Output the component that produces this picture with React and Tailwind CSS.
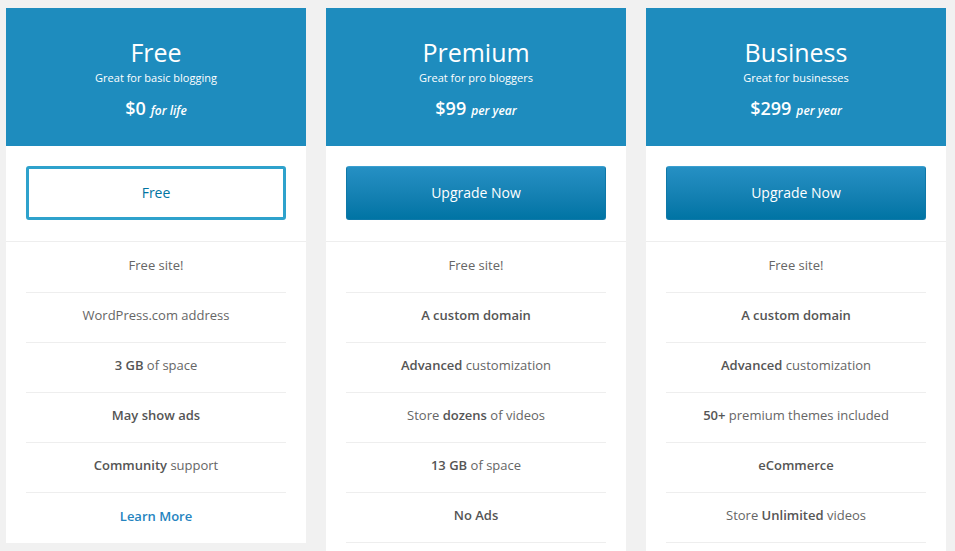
import React from "react";

const plans = [
  {
    name: "Free",
    tagline: "Great for basic blogging",
    price: "$0",
    period: "for life",
    free: true,
    features: [
      [{ t: "Free site!" }],
      [{ t: "WordPress.com address" }],
      [{ t: "3 GB", b: true }, { t: " of space" }],
      [{ t: "May show ads", b: true }],
      [{ t: "Community", b: true }, { t: " support" }],
    ],
  },
  {
    name: "Premium",
    tagline: "Great for pro bloggers",
    price: "$99",
    period: "per year",
    features: [
      [{ t: "Free site!" }],
      [{ t: "A custom domain", b: true }],
      [{ t: "Advanced", b: true }, { t: " customization" }],
      [{ t: "Store " }, { t: "dozens", b: true }, { t: " of videos" }],
      [{ t: "13 GB", b: true }, { t: " of space" }],
      [{ t: "No Ads", b: true }],
    ],
  },
  {
    name: "Business",
    tagline: "Great for businesses",
    price: "$299",
    period: "per year",
    features: [
      [{ t: "Free site!" }],
      [{ t: "A custom domain", b: true }],
      [{ t: "Advanced", b: true }, { t: " customization" }],
      [{ t: "50+", b: true }, { t: " premium themes included" }],
      [{ t: "eCommerce", b: true }],
      [{ t: "Store " }, { t: "Unlimited", b: true }, { t: " videos" }],
    ],
  },
];

function Card({ plan }) {
  return (
    <div className="w-[300px] shrink-0 bg-white self-start">
      <div className="h-[138px] bg-[#1e8cbe] flex flex-col items-center text-white pt-[28px]">
        <div className="text-[25px] leading-[32px]">{plan.name}</div>
        <div className="text-[11px] leading-[16px] mt-[2px]">{plan.tagline}</div>
        <div className="mt-[10px] leading-[24px] flex items-baseline gap-[5px]">
          <span className="text-[18px] font-semibold">{plan.price}</span>
          <span className="text-[12px] italic font-semibold">{plan.period}</span>
        </div>
      </div>
      <div className="px-5 pt-5 pb-[21px] border-b border-[#eeeeee]">
        {plan.free ? (
          <div className="h-[54px] rounded-[3px] border-[3px] border-[#2ea2cc] flex items-center justify-center pb-px text-[14px] text-[#0074a2]">
            Free
          </div>
        ) : (
          <div className="h-[54px] rounded-[3px] border border-[#0e78a8] border-t-[#3a9fd0] bg-gradient-to-b from-[#2590c4] to-[#0074a4] flex items-center justify-center pb-[2px] text-[14px] text-white">
            Upgrade Now
          </div>
        )}
      </div>
      <div className="px-5 pt-px">
        {plan.features.map((f, i) => (
          <div
            key={i}
            className="h-[50px] border-b border-[#eeeeee] flex items-center justify-center pb-[3px] text-[13px] text-[#666666]"
          >
            <span>
              {f.map((p, j) =>
                p.b ? (
                  <span key={j} className="font-semibold text-[#555555]">
                    {p.t}
                  </span>
                ) : (
                  <span key={j}>{p.t}</span>
                )
              )}
            </span>
          </div>
        ))}
        {plan.free ? (
          <div className="h-[50px] flex items-center justify-center pb-[3px] text-[13px] font-semibold text-[#2584c0]">
            Learn More
          </div>
        ) : (
          <div className="h-[50px]" />
        )}
      </div>
    </div>
  );
}

export default function App() {
  return (
    <div
      className="h-screen overflow-hidden bg-[#f1f1f1] flex gap-5 pl-[6px] pt-2"
      style={{ fontFamily: '"Open Sans", "Noto Sans", sans-serif' }}
    >
      {plans.map((p) => (
        <Card key={p.name} plan={p} />
      ))}
    </div>
  );
}
